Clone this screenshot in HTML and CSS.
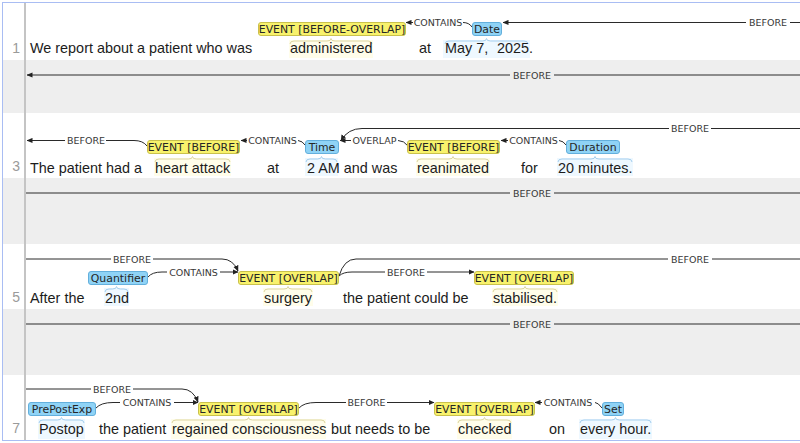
FILE: index.html
```html
<!DOCTYPE html>
<html lang="en">

<head>
	<meta charset="UTF-8">
	<title>Annotation</title>
	<link rel="stylesheet" href="styles.css">
</head>

<body>
	<div class="doc">
		<!-- sentence 1 -->
		<div class="sent">
			<div class="num">1</div>
			<svg width="774" height="57" viewBox="26 3 774 57">
				<defs>
					<marker id="arr" viewBox="0 0 6 6" refX="5.5" refY="3" markerWidth="6" markerHeight="6" markerUnits="userSpaceOnUse" orient="auto">
						<path d="M0 0.4 L6 3 L0 5.6z" fill="#222"></path>
					</marker>
				</defs>
				<rect class="hl ev" x="289" y="40" width="84" height="18"></rect>
				<rect class="hl en" x="443" y="40" width="87" height="18"></rect>
				<path class="br ev" d="M290 44 Q290 41 294 41 L327 41 Q331 41 331 38.5 Q331 41 335 41 L368 41 Q372 41 372 44"></path>
				<path class="br en" d="M445 44 Q445 41 449 41 L482.5 41 Q486.5 41 486.5 38.5 Q486.5 41 490.5 41 L524 41 Q528 41 528 44"></path>

				<path class="arc" d="M472 27 Q469 22.5 463 22.5"></path>
				<text class="al" x="438" y="26">CONTAINS</text>
				<path class="arc" d="M413 22.5 L406 22.5" marker-end="url(#arr)"></path>
				<path class="arc" d="M800 22.5 L790 22.5"></path>
				<text class="al" x="768" y="26">BEFORE</text>
				<path class="arc" d="M746 22.5 L503 22.5" marker-end="url(#arr)"></path>

				<rect class="lb ev" x="258.5" y="22.5" width="147" height="13" rx="2.5"></rect>
				<text class="lt" x="332" y="32.9">EVENT [BEFORE-OVERLAP]</text>
				<rect class="lb en" x="472.5" y="22.5" width="29" height="13" rx="2.5"></rect>
				<text class="lt" x="487" y="32.9">Date</text>

				<text class="w" x="30" y="53">We report about a patient who was</text>
				<text class="w" x="290" y="53">administered</text>
				<text class="w" x="419" y="53">at</text>
				<text class="w" x="445" y="53">May 7,</text>
				<text class="w" x="497" y="53">2025.</text>
			</svg>
		</div>

		<!-- sentence 2 -->
		<div class="sent odd">
			<div class="num"></div>
			<svg width="774" height="53" viewBox="26 60 774 53">
				<path class="arc" d="M510 75 L27 75" marker-end="url(#arr)"></path>
				<text class="al" x="532" y="78.5">BEFORE</text>
				<path class="arc" d="M554 75 L800 75"></path>
			</svg>
		</div>

		<!-- sentence 3 -->
		<div class="sent">
			<div class="num">3</div>
			<svg width="774" height="65" viewBox="26 113 774 65">
				<rect class="hl ev" x="154" y="158" width="77" height="18"></rect>
				<rect class="hl en" x="305" y="158" width="33" height="18"></rect>
				<rect class="hl ev" x="416" y="158" width="74" height="18"></rect>
				<rect class="hl en" x="557" y="158" width="76" height="18"></rect>
				<path class="br ev" d="M155 162 Q155 159 159 159 L188.5 159 Q192.5 159 192.5 156.5 Q192.5 159 196.5 159 L226 159 Q230 159 230 162"></path>
				<path class="br en" d="M306 162 Q306 159 310 159 L317.5 159 Q321.5 159 321.5 156.5 Q321.5 159 325.5 159 L333 159 Q337 159 337 162"></path>
				<path class="br ev" d="M417 162 Q417 159 421 159 L449 159 Q453 159 453 156.5 Q453 159 457 159 L485 159 Q489 159 489 162"></path>
				<path class="br en" d="M558 162 Q558 159 562 159 L591 159 Q595 159 595 156.5 Q595 159 599 159 L628 159 Q632 159 632 162"></path>

				<path class="arc" d="M147 146 Q143 140.5 134 140.5 L106 140.5"></path>
				<text class="al" x="86" y="144">BEFORE</text>
				<path class="arc" d="M65 140.5 L27 140.5" marker-end="url(#arr)"></path>

				<path class="arc" d="M306 146 Q302 140.5 298 140.5"></path>
				<text class="al" x="272.5" y="144">CONTAINS</text>
				<path class="arc" d="M247 140.5 L241 140.5" marker-end="url(#arr)"></path>

				<path class="arc" d="M408 146 Q404 140.5 398 140.5"></path>
				<text class="al" x="374.5" y="144">OVERLAP</text>
				<path class="arc" d="M351 140.5 L340 140.5" marker-end="url(#arr)"></path>

				<path class="arc" d="M567 146 Q563 140.5 559 140.5"></path>
				<text class="al" x="533.5" y="144">CONTAINS</text>
				<path class="arc" d="M508 140.5 L501 140.5" marker-end="url(#arr)"></path>

				<path class="arc" d="M800 128.5 L711 128.5"></path>
				<text class="al" x="690" y="132">BEFORE</text>
				<path class="arc" d="M669 128.5 L362 128.5 Q348 128.5 341 140.5" marker-end="url(#arr)"></path>

				<rect class="lb ev" x="147.5" y="140.5" width="92" height="13" rx="2.5"></rect>
				<text class="lt" x="193.5" y="150.9">EVENT [BEFORE]</text>
				<rect class="lb en" x="305.5" y="140.5" width="33" height="13" rx="2.5"></rect>
				<text class="lt" x="322" y="150.9">Time</text>
				<rect class="lb ev" x="407.5" y="140.5" width="92" height="13" rx="2.5"></rect>
				<text class="lt" x="453.5" y="150.9">EVENT [BEFORE]</text>
				<rect class="lb en" x="566.5" y="140.5" width="53" height="13" rx="2.5"></rect>
				<text class="lt" x="593" y="150.9">Duration</text>

				<text class="w" x="30" y="172.5">The patient had a</text>
				<text class="w" x="155" y="172.5">heart attack</text>
				<text class="w" x="267" y="172.5">at</text>
				<text class="w" x="307" y="172.5">2 AM and was</text>
				<text class="w" x="417" y="172.5">reanimated</text>
				<text class="w" x="521" y="172.5">for</text>
				<text class="w" x="558" y="172.5">20 minutes.</text>
			</svg>
		</div>

		<!-- sentence 4 -->
		<div class="sent odd">
			<div class="num"></div>
			<svg width="774" height="66" viewBox="26 178 774 66">
				<path class="arc" d="M26 193 L510 193"></path>
				<text class="al" x="532" y="196.5">BEFORE</text>
				<path class="arc" d="M554 193 L800 193"></path>
			</svg>
		</div>

		<!-- sentence 5 -->
		<div class="sent">
			<div class="num">5</div>
			<svg width="774" height="65" viewBox="26 244 774 65">
				<rect class="hl en" x="104" y="288" width="25" height="18"></rect>
				<rect class="hl ev" x="263" y="288" width="50" height="18"></rect>
				<rect class="hl ev" x="492" y="288" width="66" height="18"></rect>
				<path class="br en" d="M105 292 Q105 289 109 289 L112.5 289 Q116.5 289 116.5 286.5 Q116.5 289 120.5 289 L124 289 Q128 289 128 292"></path>
				<path class="br ev" d="M264 292 Q264 289 268 289 L284 289 Q288 289 288 286.5 Q288 289 292 289 L308 289 Q312 289 312 292"></path>
				<path class="br ev" d="M493 292 Q493 289 497 289 L521 289 Q525 289 525 286.5 Q525 289 529 289 L553 289 Q557 289 557 292"></path>

				<path class="arc" d="M26 259 L111 259"></path>
				<text class="al" x="132" y="262.5">BEFORE</text>
				<path class="arc" d="M153 259 L222 259 Q233 259 238 271" marker-end="url(#arr)"></path>

				<path class="arc" d="M148 277 Q152 272 162 272 L167 272"></path>
				<text class="al" x="193.5" y="275.5">CONTAINS</text>
				<path class="arc" d="M220 272 L238 272" marker-end="url(#arr)"></path>

				<path class="arc" d="M339 276 Q344 259 356 259 L668 259"></path>
				<text class="al" x="690" y="262.5">BEFORE</text>
				<path class="arc" d="M712 259 L800 259"></path>

				<path class="arc" d="M339 276 Q343 272 352 272 L385 272"></path>
				<text class="al" x="406" y="275.5">BEFORE</text>
				<path class="arc" d="M427 272 L474 272" marker-end="url(#arr)"></path>

				<rect class="lb en" x="88.5" y="271.5" width="59" height="13" rx="2.5"></rect>
				<text class="lt" x="118" y="281.9">Quantifier</text>
				<rect class="lb ev" x="238.5" y="271.5" width="100" height="13" rx="2.5"></rect>
				<text class="lt" x="288.5" y="281.9">EVENT [OVERLAP]</text>
				<rect class="lb ev" x="474.5" y="271.5" width="99" height="13" rx="2.5"></rect>
				<text class="lt" x="524" y="281.9">EVENT [OVERLAP]</text>

				<text class="w" x="30" y="303">After the</text>
				<text class="w" x="105" y="303">2nd</text>
				<text class="w" x="264" y="303">surgery</text>
				<text class="w" x="343" y="303">the patient could be</text>
				<text class="w" x="493" y="303">stabilised.</text>
			</svg>
		</div>

		<!-- sentence 6 -->
		<div class="sent odd">
			<div class="num"></div>
			<svg width="774" height="66" viewBox="26 309 774 66">
				<path class="arc" d="M26 324 L510 324"></path>
				<text class="al" x="532" y="327.5">BEFORE</text>
				<path class="arc" d="M554 324 L800 324"></path>
			</svg>
		</div>

		<!-- sentence 7 -->
		<div class="sent">
			<div class="num">7</div>
			<svg width="774" height="65" viewBox="26 375 774 65">
				<rect class="hl en" x="38" y="419" width="47" height="20"></rect>
				<rect class="hl ev" x="171" y="419" width="155" height="20"></rect>
				<rect class="hl ev" x="457" y="419" width="55" height="20"></rect>
				<rect class="hl en" x="579" y="419" width="73" height="20"></rect>
				<path class="br en" d="M39 423 Q39 420 43 420 L57.5 420 Q61.5 420 61.5 417.5 Q61.5 420 65.5 420 L80 420 Q84 420 84 423"></path>
				<path class="br ev" d="M172 423 Q172 420 176 420 L244.5 420 Q248.5 420 248.5 417.5 Q248.5 420 252.5 420 L321 420 Q325 420 325 423"></path>
				<path class="br ev" d="M458 423 Q458 420 462 420 L480.5 420 Q484.5 420 484.5 417.5 Q484.5 420 488.5 420 L507 420 Q511 420 511 423"></path>
				<path class="br en" d="M580 423 Q580 420 584 420 L611.5 420 Q615.5 420 615.5 417.5 Q615.5 420 619.5 420 L647 420 Q651 420 651 423"></path>

				<path class="arc" d="M26 389 L91 389"></path>
				<text class="al" x="112" y="392.5">BEFORE</text>
				<path class="arc" d="M133 389 L182 389 Q193 389 198 402" marker-end="url(#arr)"></path>

				<path class="arc" d="M96 408 Q101 402.5 113 402.5 L120 402.5"></path>
				<text class="al" x="147" y="406">CONTAINS</text>
				<path class="arc" d="M174 402.5 L198 402.5" marker-end="url(#arr)"></path>

				<path class="arc" d="M299 408 Q304 402.5 316 402.5 L346 402.5"></path>
				<text class="al" x="366.5" y="406">BEFORE</text>
				<path class="arc" d="M387 402.5 L434 402.5" marker-end="url(#arr)"></path>

				<path class="arc" d="M602 408 Q598 402.5 595 402.5"></path>
				<text class="al" x="568" y="406">CONTAINS</text>
				<path class="arc" d="M542 402.5 L535 402.5" marker-end="url(#arr)"></path>

				<rect class="lb en" x="28.5" y="402.5" width="67" height="13" rx="2.5"></rect>
				<text class="lt" x="62" y="412.9">PrePostExp</text>
				<rect class="lb ev" x="198.5" y="402.5" width="100" height="13" rx="2.5"></rect>
				<text class="lt" x="248.5" y="412.9">EVENT [OVERLAP]</text>
				<rect class="lb ev" x="434.5" y="402.5" width="100" height="13" rx="2.5"></rect>
				<text class="lt" x="484.5" y="412.9">EVENT [OVERLAP]</text>
				<rect class="lb en" x="602.5" y="402.5" width="21" height="13" rx="2.5"></rect>
				<text class="lt" x="613" y="412.9">Set</text>

				<text class="w" x="39" y="434">Postop</text>
				<text class="w" x="99" y="434">the patient</text>
				<text class="w" x="172" y="434">regained consciousness</text>
				<text class="w" x="331" y="434">but needs to be</text>
				<text class="w" x="458" y="434">checked</text>
				<text class="w" x="549" y="434">on</text>
				<text class="w" x="580" y="434">every hour.</text>
			</svg>
		</div>
	</div>
</body>

</html>
```

FILE: styles.css
```css
* {
    margin: 0;
    padding: 0;
}
body {
    background: #fff;
    font-family: "Liberation Sans", Arial, sans-serif;
    overflow: hidden;
}
.doc {
    margin: 2px 0 0 2px;
    border: 1px solid #a9bdf3;
    border-right: 0;
}
.sent {
    display: flex;
}
.sent.odd {
    background: #eeeeee;
}
.num {
    flex: none;
    width: 17px;
    padding-right: 4px;
    border-right: 2px solid #c4c4c4;
    display: flex;
    align-items: flex-end;
    justify-content: flex-end;
    padding-bottom: 4px;
    font-size: 14px;
    line-height: 16px;
    color: #9a9a9a;
}
.sent svg {
    display: block;
    flex: none;
}
.w {
    font-family: "Liberation Sans", Arial, sans-serif;
    font-size: 14.4px;
    fill: #1c1c1c;
}
.hl.ev {
    fill: #fffdea;
}
.hl.en {
    fill: #eef8ff;
}
.br {
    fill: none;
    stroke-width: 1;
}
.br.ev {
    stroke: #ddd6a2;
}
.br.en {
    stroke: #a6cfee;
}
.lb.ev {
    fill: #f8f26c;
    stroke: #c9c14c;
}
.lb.en {
    fill: #8fd3f6;
    stroke: #63afdc;
}
.lt {
    font-family: "DejaVu Sans", sans-serif;
    font-size: 10.9px;
    fill: #262626;
    text-anchor: middle;
}
.arc {
    fill: none;
    stroke: #2a2a2a;
    stroke-width: 1;
}
.al {
    font-family: "DejaVu Sans", sans-serif;
    font-size: 9.5px;
    fill: #383838;
    text-anchor: middle;
}
```
